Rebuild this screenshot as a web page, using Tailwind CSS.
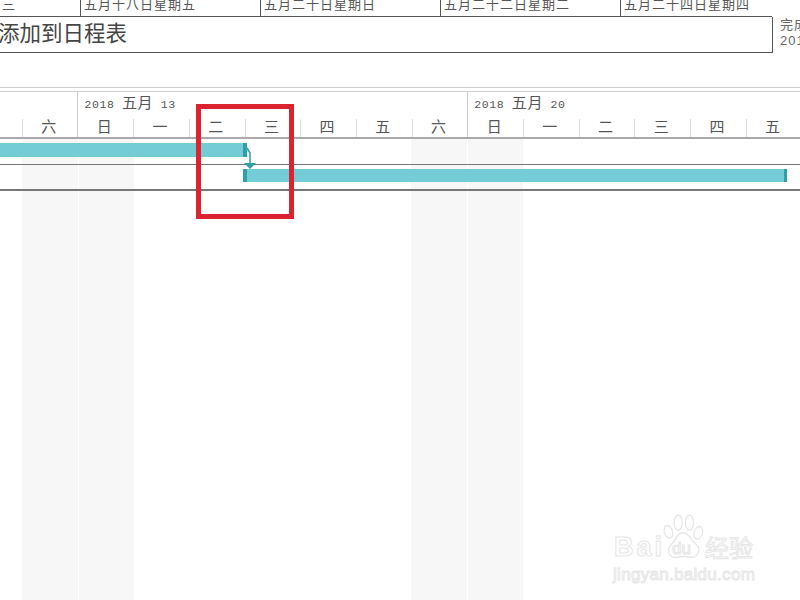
<!DOCTYPE html>
<html lang="zh-CN">
<head>
  <meta charset="UTF-8">
  <title>日程表</title>
  <script src="https://cdn.jsdelivr.net/npm/@tailwindcss/browser@4"></script>
</head>
<body class="bg-white">
  <div class="relative w-[800px] h-[600px] overflow-hidden bg-white text-[#555] font-['Liberation_Sans','Noto_Sans_CJK_SC',sans-serif]">

    <!-- timeline strip, cut off at the top -->
    <div class="flex h-[17px] w-[772px] border-b border-[#555] overflow-hidden text-[13px] leading-[10px] tracking-[1px]">
      <div class="w-[80px] pl-[2px]">三</div>
      <div class="w-[180px] border-l border-[#555] pl-[3px]">五月十八日星期五</div>
      <div class="w-[180px] border-l border-[#555] pl-[3px]">五月二十日星期日</div>
      <div class="w-[180px] border-l border-[#555] pl-[3px]">五月二十二日星期二</div>
      <div class="w-[152px] border-l border-[#555] pl-[3px]">五月二十四日星期四</div>
    </div>

    <div class="flex h-[36px]">
      <div class="w-[775px] shrink-0 h-[36px] border-b border-r border-[#555] ml-[-2px] text-[21.5px] leading-[35px] text-[#444]">添加到日程表</div>
      <div class="pl-[7px] text-[13px] leading-[16px] text-[#666] whitespace-nowrap tracking-[1px]">完成<br>201</div>
    </div>

    <div class="h-[34px]"></div>
    <div class="h-[5px] border-y border-[#ccc]"></div>

    <!-- gantt header -->
    <div class="h-[47px] border-b-2 border-[#aaa] pl-[21.8px] grid grid-cols-[repeat(14,55.7px)] text-[15px]">
      <div class="flex items-end"><span class="flex-1 text-center border-l border-[#ddd] h-[18px] leading-[16px] pr-[3px]">六</span></div>
      <div class="relative flex items-end border-l border-[#ccc]">
        <span class="absolute left-[6px] top-[5px] whitespace-nowrap text-[11.5px] leading-[16px] font-['Liberation_Mono','Noto_Sans_CJK_SC',monospace] tracking-[0.6px]">2018 <span class="text-[15px]">五月</span> 13</span>
        <span class="flex-1 text-center h-[18px] leading-[16px] pr-[3px]">日</span>
      </div>
      <div class="flex items-end"><span class="flex-1 text-center border-l border-[#ddd] h-[18px] leading-[16px] pr-[3px]">一</span></div>
      <div class="flex items-end"><span class="flex-1 text-center border-l border-[#ddd] h-[18px] leading-[16px] pr-[3px]">二</span></div>
      <div class="flex items-end"><span class="flex-1 text-center border-l border-[#ddd] h-[18px] leading-[16px] pr-[3px]">三</span></div>
      <div class="flex items-end"><span class="flex-1 text-center border-l border-[#ddd] h-[18px] leading-[16px] pr-[3px]">四</span></div>
      <div class="flex items-end"><span class="flex-1 text-center border-l border-[#ddd] h-[18px] leading-[16px] pr-[3px]">五</span></div>
      <div class="flex items-end"><span class="flex-1 text-center border-l border-[#ddd] h-[18px] leading-[16px] pr-[3px]">六</span></div>
      <div class="relative flex items-end border-l border-[#ccc]">
        <span class="absolute left-[6px] top-[5px] whitespace-nowrap text-[11.5px] leading-[16px] font-['Liberation_Mono','Noto_Sans_CJK_SC',monospace] tracking-[0.6px]">2018 <span class="text-[15px]">五月</span> 20</span>
        <span class="flex-1 text-center h-[18px] leading-[16px] pr-[3px]">日</span>
      </div>
      <div class="flex items-end"><span class="flex-1 text-center border-l border-[#ddd] h-[18px] leading-[16px] pr-[3px]">一</span></div>
      <div class="flex items-end"><span class="flex-1 text-center border-l border-[#ddd] h-[18px] leading-[16px] pr-[3px]">二</span></div>
      <div class="flex items-end"><span class="flex-1 text-center border-l border-[#ddd] h-[18px] leading-[16px] pr-[3px]">三</span></div>
      <div class="flex items-end"><span class="flex-1 text-center border-l border-[#ddd] h-[18px] leading-[16px] pr-[3px]">四</span></div>
      <div class="flex items-end"><span class="flex-1 text-center border-l border-[#ddd] h-[18px] leading-[16px] pr-[3px]">五</span></div>
    </div>

    <!-- chart body: weekend bands sit behind the rows -->
    <div class="relative h-[461px]">
      <div class="absolute top-0 bottom-0 left-[22px] w-[112px] flex gap-[1px]">
        <div class="flex-1 bg-[#f7f7f7]"></div><div class="flex-1 bg-[#f7f7f7]"></div>
      </div>
      <div class="absolute top-0 bottom-0 left-[411px] w-[112px] flex gap-[1px]">
        <div class="flex-1 bg-[#f7f7f7]"></div><div class="flex-1 bg-[#f7f7f7]"></div>
      </div>

      <div class="relative flex flex-col">
        <div class="h-[26px] border-b border-[#777] pt-[4px]">
          <div class="flex h-[14px] w-[247px] bg-[#74ccd6] justify-end">
            <div class="w-[4px] bg-[#2f9fa8]"></div>
          </div>
        </div>
        <div class="h-[26px] border-b-2 border-[#777] pt-[4px] pl-[243px]">
          <div class="flex h-[13px] w-[544px] bg-[#74ccd6] justify-between">
            <div class="w-[4px] bg-[#2f9fa8]"></div>
            <div class="w-[3px] bg-[#2f9fa8]"></div>
          </div>
        </div>
      </div>

      <!-- link between the two bars -->
      <svg class="absolute left-[240px] top-[5px]" width="20" height="28" viewBox="0 0 20 28" fill="none">
        <path d="M7 4 L10 9 V22" stroke="#2f9fa8" stroke-width="1.5"/>
        <path d="M4 19 H16 L10 25 Z" fill="#2f9fa8"/>
      </svg>
    </div>

    <!-- red highlight -->
    <div class="absolute left-[196px] top-[104px] w-[98px] h-[115px] border-[5px] border-[#dc2430]"></div>

    <!-- watermark -->
    <div class="absolute left-[612px] top-[512px] w-[150px] h-[75px] text-transparent [-webkit-text-stroke:1px_#e6e6e6]">
      <svg class="absolute left-[50px] top-[2px]" width="42" height="47" viewBox="0 0 52 50" preserveAspectRatio="none" fill="none" stroke="#e6e6e6" stroke-width="1.5">
        <ellipse cx="8" cy="19" rx="5" ry="7" transform="rotate(-25 8 19)"/>
        <ellipse cx="20" cy="9" rx="5" ry="8"/>
        <ellipse cx="34" cy="9" rx="5" ry="8"/>
        <ellipse cx="45" cy="20" rx="5" ry="7" transform="rotate(25 45 20)"/>
        <path d="M26 20 C34 20 36 29 43 33 C49 38 44 47 35 46 C30 45 23 45 18 46 C9 47 5 39 11 33 C17 29 18 20 26 20 Z"/>
      </svg>
      <span class="absolute left-[2px] top-[19px] text-[27px] leading-[32px] tracking-[3px] font-bold font-['Liberation_Sans',sans-serif]">Bai</span>
      <span class="absolute left-[60px] top-[27px] text-[17px] leading-[20px] font-['Liberation_Sans',sans-serif]">du</span>
      <span class="absolute left-[93px] top-[20px] text-[24px] leading-[30px] whitespace-nowrap font-['Noto_Sans_CJK_SC',sans-serif]">经验</span>
      <span class="absolute left-[1px] top-[53px] text-[17px] leading-[20px] whitespace-nowrap font-['Liberation_Sans',sans-serif] tracking-[0.3px]">jingyan.baidu.com</span>
    </div>
  </div>
</body>
</html>
